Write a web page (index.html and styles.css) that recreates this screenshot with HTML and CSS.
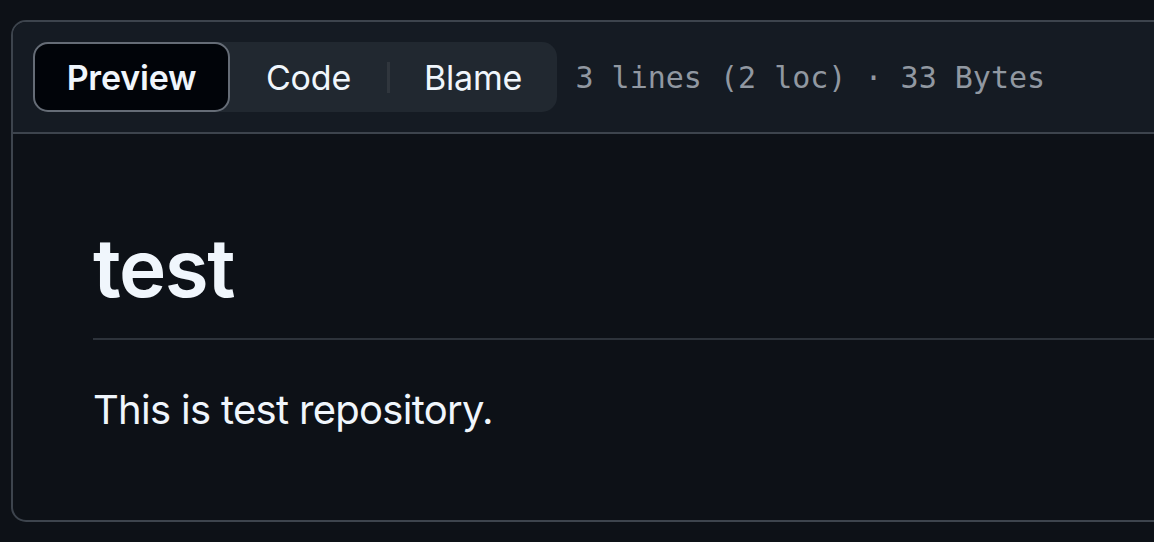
FILE: index.html
```html
<!DOCTYPE html>
<html lang="en">
<head>
<meta charset="utf-8">
<title>README.md</title>
<link rel="stylesheet" href="styles.css">
</head>
<body>
<div class="page">
  <section class="file-box">
    <header class="file-header">
      <div class="segmented">
        <button class="seg-btn seg-preview is-selected">Preview</button>
        <button class="seg-btn seg-code">Code</button>
        <span class="seg-divider"></span>
        <button class="seg-btn seg-blame">Blame</button>
      </div>
      <div class="file-meta">3 lines (2 loc) · 33 Bytes</div>
    </header>
    <article class="markdown">
      <h1 class="md-h1">test</h1>
      <p class="md-p">This is test repository.</p>
    </article>
  </section>
</div>
</body>
</html>
```

FILE: styles.css
```css
html, body {
  margin: 0;
  padding: 0;
  background: #0d1117;
  overflow: hidden;
}

.page {
  padding: 20px 0 0 11px;
  font-family: Inter, "Liberation Sans", sans-serif;
  color: #f0f6fc;
}

.file-box {
  margin-right: -100px;
  border: 2.5px solid #3d444d;
  border-radius: 15px;
  background: #0d1117;
  overflow: hidden;
}

.file-header {
  display: flex;
  align-items: center;
  gap: 19px;
  padding: 20px 20px;
  background: #151b23;
  border-bottom: 2.5px solid #3d444d;
}

.segmented {
  display: flex;
  align-items: center;
  height: 70px;
  background: #212830;
  border-radius: 15px;
}

.seg-btn {
  height: 70px;
  box-sizing: border-box;
  border: 2.5px solid transparent;
  border-radius: 15px;
  background: transparent;
  color: #f0f6fc;
  font-family: Inter, "Liberation Sans", sans-serif;
  font-size: 34px;
  font-weight: 400;
  padding: 0;
  text-align: center;
  letter-spacing: -0.2px;
}

.seg-btn.is-selected {
  background: #010409;
  border-color: #656c76;
  font-weight: 600;
}

.seg-preview { width: 197px; }
.seg-code { width: 157px; }
.seg-blame { width: 167px; }

.seg-divider {
  width: 2.5px;
  height: 31px;
  background: #30363d;
}

.file-meta {
  font-family: "DejaVu Sans Mono", "Liberation Mono", monospace;
  font-size: 30px;
  color: #9198a1;
  white-space: nowrap;
}

.markdown {
  padding: 80px 80px 80px 80px;
}

.md-h1 {
  margin: 0 0 40px;
  padding: 4px 0 20px;
  font-size: 80px;
  font-weight: 600;
  line-height: 1.25;
  letter-spacing: -1.5px;
  border-bottom: 2.5px solid #2d333b;
}

.md-p {
  margin: 0;
  font-size: 40px;
  line-height: 1.5;
  letter-spacing: -0.7px;
}
```
